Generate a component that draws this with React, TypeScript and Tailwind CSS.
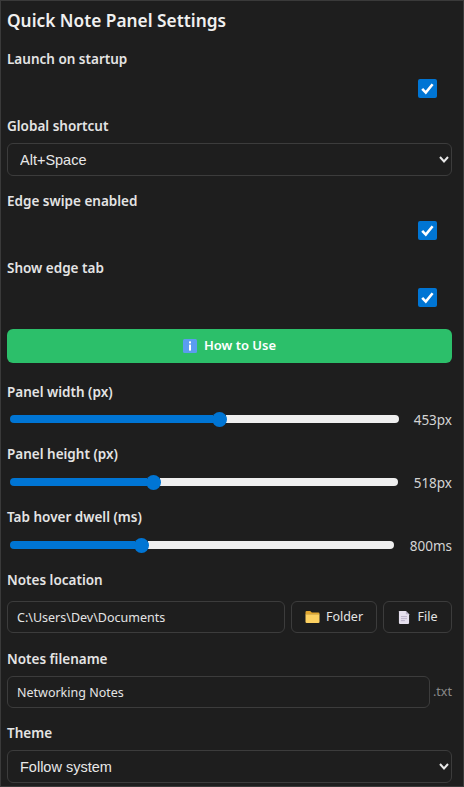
import React from "react";

const ui = "font-['Noto_Sans','Open_Sans',sans-serif]";

function Label({ children, className = "" }: { children: React.ReactNode; className?: string }) {
  return <div className={`h-5 leading-5 text-[13.5px] font-semibold text-[#e4e4e4] ${className}`}>{children}</div>;
}

function Check({ className = "" }: { className?: string }) {
  return (
    <div className={`flex justify-end pr-[15px] ${className}`}>
      <div className="w-[19px] h-[19px] rounded-[2px] bg-[#0075d4] flex items-center justify-center">
        <svg width="15" height="15" viewBox="0 0 15 15" fill="none">
          <path d="M2.2 7.8 L5.8 11.6 L12.6 3.2" stroke="#fff" strokeWidth="2.6" />
        </svg>
      </div>
    </div>
  );
}

function Select({ value, className = "" }: { value: string; className?: string }) {
  return (
    <div className={`relative h-[33px] ${className}`}>
      <select
        value={value}
        onChange={() => {}}
        className="appearance-none w-full h-full rounded-md border border-[#3c3c3c] bg-[#1e1e1e] pl-[12px] pt-[2px] text-[14.5px] text-[#e8e8e8] font-['Liberation_Sans',sans-serif] outline-none"
      >
        <option>{value}</option>
      </select>
      <svg className="absolute right-[3px] top-[12px]" width="10" height="9" viewBox="0 0 10 9" fill="none">
        <path d="M1 2 L5 6.5 L9 2" stroke="#e8e8e8" strokeWidth="2" />
      </svg>
    </div>
  );
}

function Slider({ fill, rest, value, className = "" }: { fill: string; rest: string; value: string; className?: string }) {
  return (
    <div className={`flex items-center h-[20px] justify-between ${className}`}>
      <div className="ml-[3px] flex items-center h-full">
        <div className={`${fill} h-[8px] rounded-l-full bg-[#0075d4]`} />
        <div className="w-[15px] h-[15px] rounded-full bg-[#0075d4] shrink-0 -mx-[1px] relative" />
        <div className={`${rest} h-[8px] rounded-r-full bg-[#efefef]`} />
      </div>
      <div className="w-[48px] pt-[2px] text-right text-[13.5px] text-[#d4d4d4]">{value}</div>
    </div>
  );
}

function TextBox({ value, className = "" }: { value: string; className?: string }) {
  return (
    <input
      readOnly
      value={value}
      className={`h-[32px] rounded-md border border-[#3c3c3c] bg-[#1e1e1e] pl-[9px] text-[12.5px] text-[#e4e4e4] outline-none ${ui} ${className}`}
    />
  );
}

function FolderIcon() {
  return (
    <svg width="15" height="14" viewBox="0 0 15 14">
      <path d="M0.5 2.2 Q0.5 1 1.7 1 H5.2 L6.8 2.6 H13.3 Q14.5 2.6 14.5 3.8 V4.5 H0.5 Z" fill="#e0a630" />
      <path d="M0.5 4.2 H14.5 V12 Q14.5 13 13.3 13 H1.7 Q0.5 13 0.5 12 Z" fill="#fdd161" />
    </svg>
  );
}

function FileIcon() {
  return (
    <svg width="12" height="15" viewBox="0 0 13 15">
      <path d="M1.5 0.5 H8.5 L12 4 V13.2 Q12 14.5 10.8 14.5 H2.2 Q1 14.5 1 13.2 V1 Z" fill="#e6e0ee" />
      <path d="M8.5 0.5 L12 4 H8.5 Z" fill="#b9b0c8" />
      <path d="M3.2 6.5 H9.8 M3.2 8.7 H9.8 M3.2 10.9 H7.5" stroke="#b9b0c8" strokeWidth="1" />
    </svg>
  );
}

function InfoIcon() {
  return (
    <svg width="14" height="14" viewBox="0 0 14 14">
      <rect x="0" y="0" width="14" height="14" rx="1.5" fill="#5b9cf0" />
      <rect x="6" y="2.4" width="2" height="2" fill="#fff" />
      <rect x="6" y="5.6" width="2" height="6" fill="#fff" />
    </svg>
  );
}

export default function App() {
  return (
    <div className={`w-[464px] h-[787px] overflow-hidden box-border border border-[#3a3a3a] bg-[#1e1e1e] pl-[6px] pr-[11px] pt-[9px] ${ui}`}>
      <h1 className="h-5 leading-[21px] text-[17.3px] font-semibold text-[#f0f0f0]">Quick Note Panel Settings</h1>
      <Label className="mt-[19px]">Launch on startup</Label>
      <Check className="mt-[10px]" />
      <Label className="mt-[18px]">Global shortcut</Label>
      <Select value="Alt+Space" className="mt-[7px]" />
      <Label className="mt-[15px]">Edge swipe enabled</Label>
      <Check className="mt-[10px]" />
      <Label className="mt-[18px]">Show edge tab</Label>
      <Check className="mt-[10px]" />
      <button className="mt-[22px] w-full h-[34px] rounded-md bg-[#2cbf6a] flex items-center justify-center gap-[7px] text-[13px] font-semibold text-white">
        <InfoIcon />
        How to Use
      </button>
      <Label className="mt-[19px]">Panel width (px)</Label>
      <Slider className="mt-[7px]" fill="w-[203px]" rest="w-[173px]" value="453px" />
      <Label className="mt-[15px]">Panel height (px)</Label>
      <Slider className="mt-[8px]" fill="w-[137px]" rest="w-[238px]" value="518px" />
      <Label className="mt-[15px]">Tab hover dwell (ms)</Label>
      <Slider className="mt-[8px]" fill="w-[125px]" rest="w-[246px]" value="800ms" />
      <Label className="mt-[15px]">Notes location</Label>
      <div className="mt-[11px] flex gap-[6px]">
        <TextBox value="C:\Users\Dev\Documents" className="w-[278px]" />
        <button className="w-[86px] h-[32px] rounded-md border border-[#3c3c3c] flex items-center justify-center gap-[6px] text-[12.5px] text-[#e4e4e4]">
          <FolderIcon />
          Folder
        </button>
        <button className="w-[69px] h-[32px] rounded-md border border-[#3c3c3c] flex items-center justify-center gap-[8px] text-[12.5px] text-[#e4e4e4]">
          <FileIcon />
          File
        </button>
      </div>
      <Label className="mt-[16px]">Notes filename</Label>
      <div className="mt-[7px] flex items-center justify-between">
        <TextBox value="Networking Notes" className="w-[423px]" />
        <span className="text-[12.5px] text-[#8a8a8a]">.txt</span>
      </div>
      <Label className="mt-[15px]">Theme</Label>
      <Select value="Follow system" className="mt-[7px]" />
    </div>
  );
}
